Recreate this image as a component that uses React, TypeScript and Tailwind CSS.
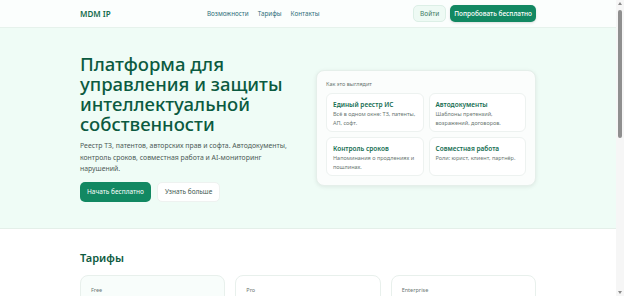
import React from "react";

const features = [
  { title: "Единый реестр ИС", text: "Всё в одном окне: ТЗ, патенты, АП, софт." },
  { title: "Автодокументы", text: "Шаблоны претензий, возражений, договоров." },
  { title: "Контроль сроков", text: "Напоминания о продлениях и пошлинах." },
  { title: "Совместная работа", text: "Роли: юрист, клиент, партнёр." },
];

const plans = ["Free", "Pro", "Enterprise"];

export default function App() {
  return (
    <div
      className="flex h-[296px] w-[624px] overflow-hidden bg-white"
      style={{ fontFamily: '"Noto Sans", "Open Sans", sans-serif' }}
    >
      <div className="flex w-[616px] flex-col">
        {/* header */}
        <header className="h-[28px] shrink-0 border-b border-[#e6f2ec] bg-[#fbfefd]">
          <div className="mx-auto flex h-full w-[456px] items-center">
            <span className="w-[127px] text-[8px] font-semibold text-[#146b4c]">MDM IP</span>
            <nav className="flex gap-[9px] text-[6.3px] text-[#2f6f7a]">
              <span>Возможности</span>
              <span>Тарифы</span>
              <span>Контакты</span>
            </nav>
            <div className="ml-auto flex items-center gap-[4px]">
              <button className="h-[17px] rounded-[5px] border border-[#dcefe6] bg-[#eefaf4] px-[6px] text-[6.5px] text-[#3f7a66]">
                Войти
              </button>
              <button className="h-[17px] rounded-[5px] bg-[#128862] px-[4px] text-[6.5px] font-medium text-white shadow-sm">
                Попробовать бесплатно
              </button>
            </div>
          </div>
        </header>

        {/* hero */}
        <section className="h-[201px] shrink-0 border-b border-[#e4efe9] bg-[#effcf6]">
          <div className="mx-auto flex w-[456px] items-start gap-[26px] pt-[26px]">
            <div className="w-[210px] shrink-0">
              <h1 className="text-[18.5px] font-medium leading-[20px] text-[#0b5a40]">
                Платформа для управления и защиты интеллектуальной собственности
              </h1>
              <p className="mt-[6px] w-[216px] text-[6.9px] leading-[11.5px] text-[#4d5b57]">
                Реестр ТЗ, патентов, авторских прав и софта. Автодокументы, контроль сроков, совместная работа и AI-мониторинг нарушений.
              </p>
              <div className="mt-[7px] flex gap-[6px]">
                <button className="h-[20px] rounded-[5px] bg-[#128862] px-[7px] text-[6.5px] text-white">
                  Начать бесплатно
                </button>
                <button className="h-[20px] rounded-[5px] border border-[#eef2f0] bg-white px-[7px] text-[6.5px] text-[#3f5a52]">
                  Узнать больше
                </button>
              </div>
            </div>
            <div className="mt-[16px] w-[220px] rounded-[8px] border border-[#e5efea] bg-[#fbfdfc] p-[9px] shadow-[0_1px_4px_rgba(0,0,0,0.08)]">
              <div className="text-[5.5px] text-[#6b7773]">Как это выглядит</div>
              <div className="mt-[5px] grid grid-cols-2 gap-[5px]">
                {features.map((f) => (
                  <div key={f.title} className="h-[39px] rounded-[6px] border border-[#edf2f0] bg-white px-[6px] py-[6px]">
                    <div className="text-[6.5px] font-semibold leading-[9px] text-[#166e52]">{f.title}</div>
                    <div className="mt-[1px] text-[5.5px] leading-[8.5px] text-[#6b7773]">{f.text}</div>
                  </div>
                ))}
              </div>
            </div>
          </div>
        </section>

        {/* pricing */}
        <section className="flex-1 bg-white">
          <div className="mx-auto w-[456px] pt-[22px]">
            <h2 className="text-[11px] font-semibold leading-[14px] text-[#0d5a40]">Тарифы</h2>
            <div className="mt-[10px] grid grid-cols-3 gap-[10px]">
              {plans.map((p, i) => (
                <div
                  key={p}
                  className={`h-[40px] rounded-[8px] border border-[#e8f0ec] px-[10px] pt-[10px] text-[5.5px] text-[#6b7773] ${
                    i === 0 ? "bg-[#f8fdfb]" : "bg-white"
                  }`}
                >
                  {p}
                </div>
              ))}
            </div>
          </div>
        </section>
      </div>

      {/* scrollbar */}
      <div className="flex w-[8px] flex-col items-center bg-[#f6f6f6]">
        <div className="mt-[2px] h-0 w-0 border-x-[2px] border-b-[3px] border-x-transparent border-b-[#8a8a8a]" />
        <div className="mt-[5px] h-[128px] w-[4px] rounded-full bg-[#8f8f8f]" />
        <div className="mt-auto mb-[2px] h-0 w-0 border-x-[2px] border-t-[3px] border-x-transparent border-t-[#8a8a8a]" />
      </div>
    </div>
  );
}
